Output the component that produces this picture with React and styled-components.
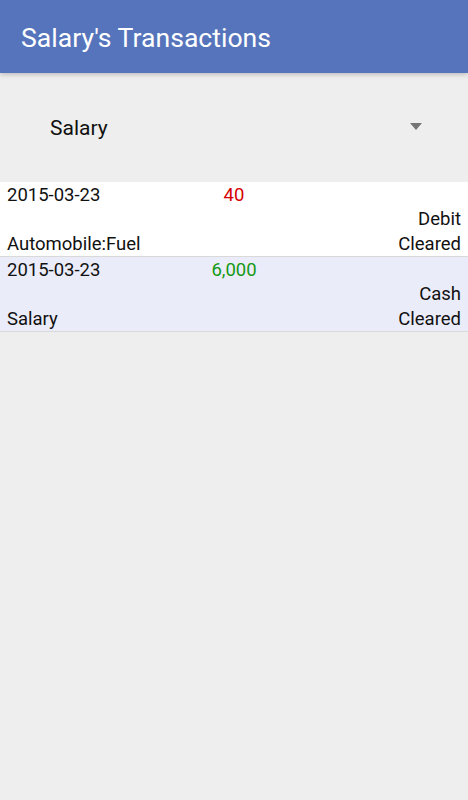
import styled, { createGlobalStyle } from "styled-components";

const GlobalStyle = createGlobalStyle`
  html, body {
    margin: 0;
    padding: 0;
    background: #eeeeee;
  }
  body {
    font-family: Roboto, "Noto Sans", sans-serif;
    -webkit-font-smoothing: antialiased;
  }
`;

const transactions = [
  {
    date: "2015-03-23",
    amount: "40",
    type: "debit",
    account: "Debit",
    category: "Automobile:Fuel",
    status: "Cleared",
  },
  {
    date: "2015-03-23",
    amount: "6,000",
    type: "credit",
    account: "Cash",
    category: "Salary",
    status: "Cleared",
  },
];

const App = () => {
  return (
    <Screen>
      <GlobalStyle />
      <ActionBar>
        <Title>Salary's Transactions</Title>
      </ActionBar>
      <SpinnerArea>
        <Spinner>
          <SpinnerText>Salary</SpinnerText>
          <Arrow />
        </Spinner>
      </SpinnerArea>
      <List>
        {transactions.map((t, i) => (
          <Row key={i} alt={i % 2 === 1}>
            <Cell>{t.date}</Cell>
            <Amount kind={t.type}>{t.amount}</Amount>
            <Cell />
            <Cell />
            <Cell />
            <Cell right>{t.account}</Cell>
            <Cell>{t.category}</Cell>
            <Cell />
            <Cell right>{t.status}</Cell>
          </Row>
        ))}
      </List>
    </Screen>
  );
};

const Screen = styled.div`
  width: 468px;
  min-height: 800px;
  background: #eeeeee;
`;

const ActionBar = styled.div`
  height: 73px;
  background: #5574bc;
  display: flex;
  align-items: center;
  padding-left: 21px;
  box-sizing: border-box;
  box-shadow: 0 1px 5px rgba(0, 0, 0, 0.25);
  position: relative;
  z-index: 1;
`;

const Title = styled.h1`
  margin: 0;
  color: #ffffff;
  font-size: 26.6px;
  font-weight: 400;
  margin-top: 2px;
`;

const SpinnerArea = styled.div`
  height: 109px;
  display: flex;
  align-items: center;
  padding: 0 46px 0 50px;
`;

const Spinner = styled.div`
  flex: 1;
  display: flex;
  align-items: center;
  justify-content: space-between;
`;

const SpinnerText = styled.span`
  font-size: 21px;
  color: #111111;
`;

const Arrow = styled.span`
  width: 0;
  height: 0;
  border-left: 6px solid transparent;
  border-right: 6px solid transparent;
  border-top: 7px solid #757575;
  margin-bottom: 3px;
`;

const List = styled.div`
  display: flex;
  flex-direction: column;
`;

const Row = styled.div`
  display: grid;
  grid-template-columns: 1fr 1fr 1fr;
  grid-template-rows: repeat(3, 1fr);
  height: 75px;
  box-sizing: border-box;
  padding: 1px 7px 0;
  background: ${(p) => (p.alt ? "#ebecf9" : "#ffffff")};
  border-bottom: 1px solid #d9d9d9;
`;

const Cell = styled.div`
  font-size: 18.5px;
  color: #111111;
  display: flex;
  align-items: center;
  justify-content: ${(p) => (p.right ? "flex-end" : "flex-start")};
  white-space: nowrap;
`;

const Amount = styled(Cell)`
  justify-content: center;
  color: ${(p) => (p.kind === "debit" ? "#d50000" : "#149914")};
`;

export default App;
